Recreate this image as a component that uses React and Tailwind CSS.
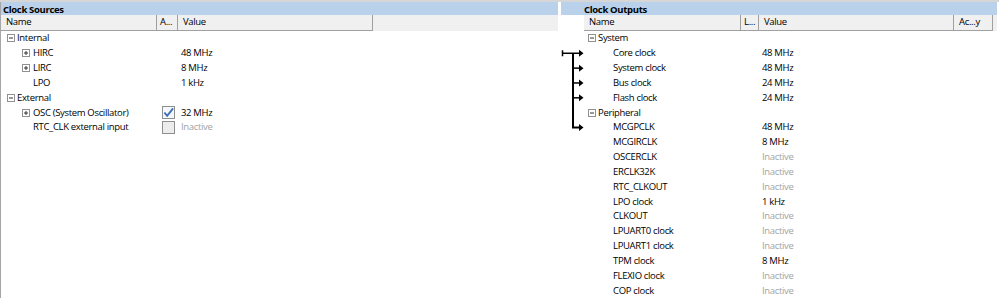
import React from 'react'

const sources = [
  { name: 'Internal', level: 0, expander: 'minus' },
  { name: 'HIRC', level: 1, expander: 'plus', value: '48 MHz' },
  { name: 'LIRC', level: 1, expander: 'plus', value: '8 MHz' },
  { name: 'LPO', level: 1, value: '1 kHz' },
  { name: 'External', level: 0, expander: 'minus' },
  { name: 'OSC (System Oscillator)', level: 1, expander: 'plus', value: '32 MHz', check: 'on' },
  { name: 'RTC_CLK external input', level: 1, value: 'Inactive', check: 'off', inactive: true },
]

const outputs = [
  { name: 'System', level: 0, expander: 'minus' },
  { name: 'Core clock', level: 1, value: '48 MHz' },
  { name: 'System clock', level: 1, value: '48 MHz' },
  { name: 'Bus clock', level: 1, value: '24 MHz' },
  { name: 'Flash clock', level: 1, value: '24 MHz' },
  { name: 'Peripheral', level: 0, expander: 'minus' },
  { name: 'MCGPCLK', level: 1, value: '48 MHz' },
  { name: 'MCGIRCLK', level: 1, value: '8 MHz' },
  { name: 'OSCERCLK', level: 1, value: 'Inactive', inactive: true },
  { name: 'ERCLK32K', level: 1, value: 'Inactive', inactive: true },
  { name: 'RTC_CLKOUT', level: 1, value: 'Inactive', inactive: true },
  { name: 'LPO clock', level: 1, value: '1 kHz' },
  { name: 'CLKOUT', level: 1, value: 'Inactive', inactive: true },
  { name: 'LPUART0 clock', level: 1, value: 'Inactive', inactive: true },
  { name: 'LPUART1 clock', level: 1, value: 'Inactive', inactive: true },
  { name: 'TPM clock', level: 1, value: '8 MHz' },
  { name: 'FLEXIO clock', level: 1, value: 'Inactive', inactive: true },
  { name: 'COP clock', level: 1, value: 'Inactive', inactive: true },
]

const Expander = ({ type }) => (
  <span className="w-[8px] h-[8px] border border-[#919191] bg-white flex items-center justify-center shrink-0">
    <svg width="6" height="6" viewBox="0 0 6 6">
      <path d="M1 3h4" stroke="#333" strokeWidth="1" />
      {type === 'plus' && <path d="M3 1v4" stroke="#333" strokeWidth="1" />}
    </svg>
  </span>
)

const Check = ({ on }) => (
  <span
    className={
      'w-[13px] h-[13px] border border-[#8e8f8f] shrink-0 flex items-center justify-center ' +
      (on ? 'bg-[#f4f7fb]' : 'bg-[#ececec]')
    }
  >
    {on && (
      <svg width="12" height="11" viewBox="0 0 12 11">
        <path d="M1.5 5.5 L4.5 9 L11 1" fill="none" stroke="#3c6fb4" strokeWidth="2" />
      </svg>
    )}
  </span>
)

const HeaderCell = ({ w, children }) => (
  <div className={`${w} h-full border-r border-[#a0a0a0] pl-[5px] flex items-center truncate`}>{children}</div>
)

const SourceRow = ({ row }) => (
  <div className="h-[14.85px] flex items-center">
    <div className="w-[156px] flex items-center">
      {row.level === 0 ? (
        <div className="pl-[6px] flex items-center gap-[2px]">
          <Expander type={row.expander} />
          <span>{row.name}</span>
        </div>
      ) : (
        <div className="pl-[21px] flex items-center gap-[2px]">
          {row.expander ? <Expander type={row.expander} /> : <span className="w-[8px]" />}
          <span className="ml-[1px]">{row.name}</span>
        </div>
      )}
    </div>
    <div className="w-[21px] flex items-center pl-[5px]">
      {row.check && <Check on={row.check === 'on'} />}
    </div>
    <div className={'pl-[3px] ' + (row.inactive ? 'text-[#a3a3a3] font-normal' : '')}>{row.value}</div>
  </div>
)

const OutputRow = ({ row }) => (
  <div className="h-[14.85px] flex items-center">
    <div className="w-[157px] flex items-center">
      {row.level === 0 ? (
        <div className="pl-[4px] flex items-center gap-[2px]">
          <Expander type={row.expander} />
          <span>{row.name}</span>
        </div>
      ) : (
        <span className="pl-[29px]">{row.name}</span>
      )}
    </div>
    <div className="w-[18px]" />
    <div className={'pl-[3px] ' + (row.inactive ? 'text-[#a3a3a3] font-normal' : '')}>{row.value}</div>
  </div>
)

const rowY = (i) => 14.85 * (i + 0.5)

// connector lines from the diagram into the system / peripheral clocks
const Arrows = () => {
  const ys = [1, 2, 3, 4].map(rowY)
  const last = rowY(6)
  return (
    <svg width="23" height="110" viewBox="0 0 23 110">
      <path d={`M1.5 ${ys[0] - 3} v6`} stroke="#000" strokeWidth="1.5" />
      <path d={`M1 ${ys[0]} H12`} stroke="#000" strokeWidth="1.5" />
      <path d={`M12 ${ys[0]} V${last} H19`} fill="none" stroke="#000" strokeWidth="2" />
      {ys.map((y) => (
        <path key={y} d={`M12 ${y} H19`} stroke="#000" strokeWidth="1.5" />
      ))}
      {[...ys, last].map((y) => (
        <polygon key={'a' + y} points={`18,${y - 3.5} 22.5,${y} 18,${y + 3.5}`} fill="#000" />
      ))}
    </svg>
  )
}

export default function App() {
  return (
    <div
      className="w-[999px] h-[298px] bg-white overflow-hidden text-[9.5px] tracking-[-0.33px] font-medium text-black border-t-2 border-[#d6d6d6]"
      style={{ fontFamily: '"Open Sans", "Noto Sans", Arial, sans-serif' }}
    >
      <div className="flex h-full">
        {/* Clock sources */}
        <div className="w-[558px] h-full border-l border-[#a6a6a6] flex flex-col">
          <div className="h-[13px] bg-[#b9d1ea] font-bold leading-[13px] pl-[2px] pt-[1px]">Clock Sources</div>
          <div className="h-[16px] bg-[#f0f0f0] flex">
            <div className="flex h-full border-b border-[#a0a0a0] bg-[#f0f0f0]">
              <HeaderCell w="w-[156px]">Name</HeaderCell>
              <div className="w-[21px] h-full border-r border-[#a0a0a0] pl-[3px] flex items-center">A...</div>
              <HeaderCell w="w-[195px]">Value</HeaderCell>
            </div>
          </div>
          <div>
            {sources.map((r) => (
              <SourceRow key={r.name} row={r} />
            ))}
          </div>
        </div>

        {/* Clock outputs */}
        <div className="ml-[3px] flex-1 h-full flex flex-col">
          <div className="h-[13px] bg-[#b9d1ea] font-bold leading-[13px] pl-[23px] pt-[1px] mr-[2px]">Clock Outputs</div>
          <div className="flex flex-1">
            <div className="w-[23px] pt-[16px]">
              <Arrows />
            </div>
            <div className="flex-1 flex flex-col">
              <div className="h-[16px] bg-[#f0f0f0] flex mr-[2px]">
                <div className="flex h-full border-b border-[#a0a0a0]">
                  <HeaderCell w="w-[157px]">Name</HeaderCell>
                  <div className="w-[18px] h-full border-r border-[#a0a0a0] pl-[3px] flex items-center">L...</div>
                  <HeaderCell w="w-[195px]">Value</HeaderCell>
                  <div className="w-[39px] h-full border-r border-[#a0a0a0] pl-[5px] flex items-center">Ac...y</div>
                </div>
              </div>
              <div>
                {outputs.map((r) => (
                  <OutputRow key={r.name} row={r} />
                ))}
              </div>
            </div>
          </div>
        </div>
      </div>
    </div>
  )
}
